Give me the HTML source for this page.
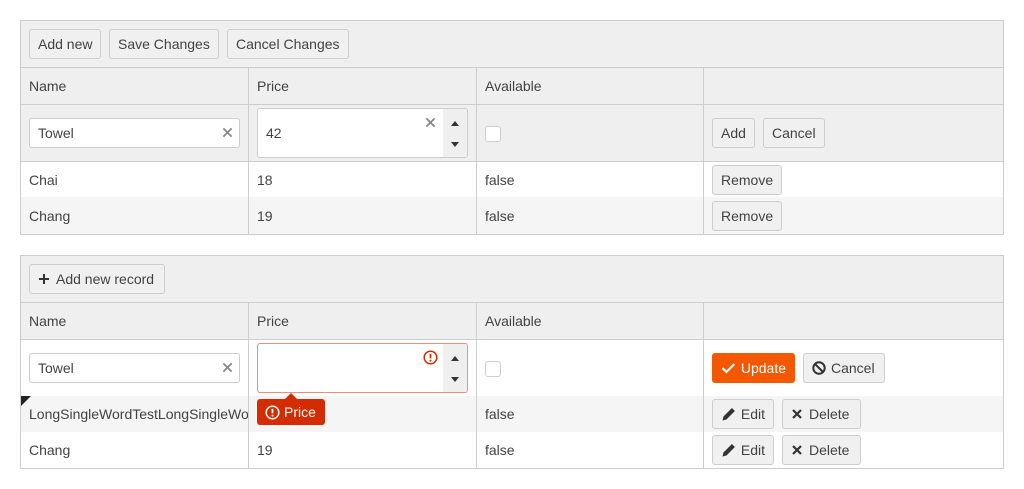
<!DOCTYPE html>
<html><head><style>
*{box-sizing:border-box;margin:0;padding:0}
body{width:1024px;height:489px;background:#fff;font-family:"Liberation Sans",sans-serif;font-size:14px;color:#424242;position:relative;overflow:hidden}
.a{position:absolute}
.btn{position:absolute;height:30px;border:1px solid #cdcdcd;border-radius:3px;background:#f0f0f0;line-height:28px;padding:0 8px;white-space:nowrap;display:flex;align-items:center;gap:4px}
.bd{position:absolute;border:1px solid #cdcdcd}
.vl{position:absolute;width:1px;background:#cdcdcd}
.hl{position:absolute;height:1px;background:#cdcdcd;left:20px;width:984px}
.t{position:absolute;line-height:16px}
.inp{position:absolute;background:#fff;border:1px solid #cdcdcd;border-radius:3px}
.cb{position:absolute;width:16px;height:16px;border:1px solid #cdcdcd;border-radius:3px;background:#fff}
.x{position:absolute}
</style></head><body>
<svg width="0" height="0" style="position:absolute"><defs>
<symbol id="cx" viewBox="0 0 12 12"><path d="M1.5 1.5l9 9M10.5 1.5l-9 9" stroke="#888" stroke-width="2"/></symbol>
<symbol id="sp" viewBox="0 0 24 50"><rect width="24" height="50" fill="#efefef"/><path d="M8 17l4-5 4 5z M8 33l4 5 4-5z" fill="#333"/></symbol>
<symbol id="pen" viewBox="0 0 16 16"><path d="M1.5 14.5l1-4 8.5-8.5 3 3-8.5 8.5z" fill="#333"/></symbol>
<symbol id="del" viewBox="0 0 12 12"><path d="M2 2l8 8M10 2l-8 8" stroke="#333" stroke-width="2.2"/></symbol>
</defs></svg>
<!-- grid 1 -->
<div class="a" style="left:20px;top:20px;width:984px;height:85px;background:#efefef"></div>
<div class="a" style="left:20px;top:104px;width:984px;height:57px;background:#efefef"></div>
<div class="a" style="left:20px;top:197px;width:984px;height:37px;background:#f5f5f5"></div>
<div class="bd" style="left:20px;top:20px;width:984px;height:215px"></div>
<div class="hl" style="top:67px"></div><div class="hl" style="top:104px"></div><div class="hl" style="top:161px"></div>
<div class="vl" style="left:248px;top:67px;height:167px"></div><div class="vl" style="left:476px;top:67px;height:167px"></div><div class="vl" style="left:703px;top:67px;height:167px"></div>
<div class="btn" style="left:29px;top:29px">Add new</div>
<div class="btn" style="left:109px;top:29px">Save Changes</div>
<div class="btn" style="left:227px;top:29px">Cancel Changes</div>
<div class="t" style="left:29px;top:78px">Name</div><div class="t" style="left:257px;top:78px">Price</div><div class="t" style="left:485px;top:78px">Available</div>
<div class="inp" style="left:29px;top:118px;width:211px;height:30px"></div><div class="t" style="left:38px;top:125px">Towel</div><svg class="x" style="left:222px;top:127px" width="11" height="11"><use href="#cx"/></svg>
<div class="inp" style="left:257px;top:108px;width:211px;height:50px;overflow:hidden"><svg class="a" style="right:0;top:0" width="24" height="50"><use href="#sp"/></svg></div>
<div class="t" style="left:266px;top:125px">42</div><svg class="x" style="left:425px;top:117px" width="11" height="11"><use href="#cx"/></svg>
<div class="cb" style="left:485px;top:126px"></div>
<div class="btn" style="left:712px;top:118px">Add</div><div class="btn" style="left:763px;top:118px">Cancel</div>
<div class="t" style="left:29px;top:172px">Chai</div><div class="t" style="left:257px;top:172px">18</div><div class="t" style="left:485px;top:172px">false</div><div class="btn" style="left:712px;top:165px">Remove</div>
<div class="t" style="left:29px;top:208px">Chang</div><div class="t" style="left:257px;top:208px">19</div><div class="t" style="left:485px;top:208px">false</div><div class="btn" style="left:712px;top:201px">Remove</div>
<!-- grid 2 -->
<div class="a" style="left:20px;top:255px;width:984px;height:85px;background:#efefef"></div>
<div class="a" style="left:20px;top:396px;width:984px;height:36px;background:#f5f5f5"></div>
<div class="bd" style="left:20px;top:255px;width:984px;height:214px"></div>
<div class="hl" style="top:302px"></div><div class="hl" style="top:339px"></div>
<div class="vl" style="left:248px;top:302px;height:166px"></div><div class="vl" style="left:476px;top:302px;height:166px"></div><div class="vl" style="left:703px;top:302px;height:166px"></div>
<div class="btn" style="left:29px;top:264px;width:136px;gap:6px"><svg width="12" height="12" viewBox="0 0 12 12"><path d="M6 1v10M1 6h10" stroke="#333" stroke-width="2"/></svg>Add new record</div>
<div class="t" style="left:29px;top:313px">Name</div><div class="t" style="left:257px;top:313px">Price</div><div class="t" style="left:485px;top:313px">Available</div>
<div class="inp" style="left:29px;top:353px;width:211px;height:30px"></div><div class="t" style="left:38px;top:360px">Towel</div><svg class="x" style="left:222px;top:362px" width="11" height="11"><use href="#cx"/></svg>
<div class="inp" style="left:257px;top:343px;width:211px;height:50px;overflow:hidden;border-color:#e8907a"><svg class="a" style="right:0;top:0" width="24" height="50"><use href="#sp"/></svg></div>
<svg class="a" style="left:423px;top:350px" width="15" height="15" viewBox="0 0 15 15"><circle cx="7.5" cy="7.5" r="6.3" stroke="#d52b00" stroke-width="1.5" fill="none"/><path d="M7.5 3.8v4.5" stroke="#d52b00" stroke-width="1.8"/><circle cx="7.5" cy="10.6" r="1" fill="#d52b00"/></svg>
<div class="cb" style="left:485px;top:361px"></div>
<div class="btn" style="left:712px;top:353px;width:83px;background:#f35800;border-color:#f35800;color:#fff;gap:5px"><svg width="15" height="14" viewBox="0 0 15 14"><path d="M1.5 7l4 4 8-8" stroke="#fff" stroke-width="2.2" fill="none"/></svg>Update</div>
<div class="btn" style="left:803px;top:353px;width:82px;gap:5px"><svg width="14" height="14" viewBox="0 0 14 14"><circle cx="7" cy="7" r="5.7" stroke="#333" stroke-width="2" fill="none"/><path d="M3 3l8 8" stroke="#333" stroke-width="2"/></svg>Cancel</div>
<div class="a" style="left:21px;top:396px;width:0;height:0;border-top:10px solid #222;border-right:10px solid transparent"></div>
<div class="t" style="left:29px;top:406px;width:219px;overflow:hidden;white-space:nowrap">LongSingleWordTestLongSingleWord</div>
<div class="a" style="left:285px;top:393px;width:0;height:0;border-left:6px solid transparent;border-right:6px solid transparent;border-bottom:6px solid #d52b00"></div>
<div class="a" style="left:257px;top:399px;width:68px;height:26px;background:#d52b00;border-radius:3px;color:#fff;display:flex;align-items:center;padding-left:8px;gap:4px"><svg width="15" height="15" viewBox="0 0 15 15"><circle cx="7.5" cy="7.5" r="6.3" stroke="#fff" stroke-width="1.5" fill="none"/><path d="M7.5 3.8v4.5" stroke="#fff" stroke-width="1.8"/><circle cx="7.5" cy="10.6" r="1" fill="#fff"/></svg>Price</div>
<div class="t" style="left:485px;top:406px">false</div>
<div class="btn" style="left:712px;top:399px;width:62px"><svg width="16" height="16"><use href="#pen"/></svg>Edit</div>
<div class="btn" style="left:782px;top:399px;width:79px;gap:6px"><svg width="12" height="12"><use href="#del"/></svg>Delete</div>
<div class="t" style="left:29px;top:442px">Chang</div><div class="t" style="left:257px;top:442px">19</div><div class="t" style="left:485px;top:442px">false</div>
<div class="btn" style="left:712px;top:435px;width:62px"><svg width="16" height="16"><use href="#pen"/></svg>Edit</div>
<div class="btn" style="left:782px;top:435px;width:79px;gap:6px"><svg width="12" height="12"><use href="#del"/></svg>Delete</div>
</body></html>
